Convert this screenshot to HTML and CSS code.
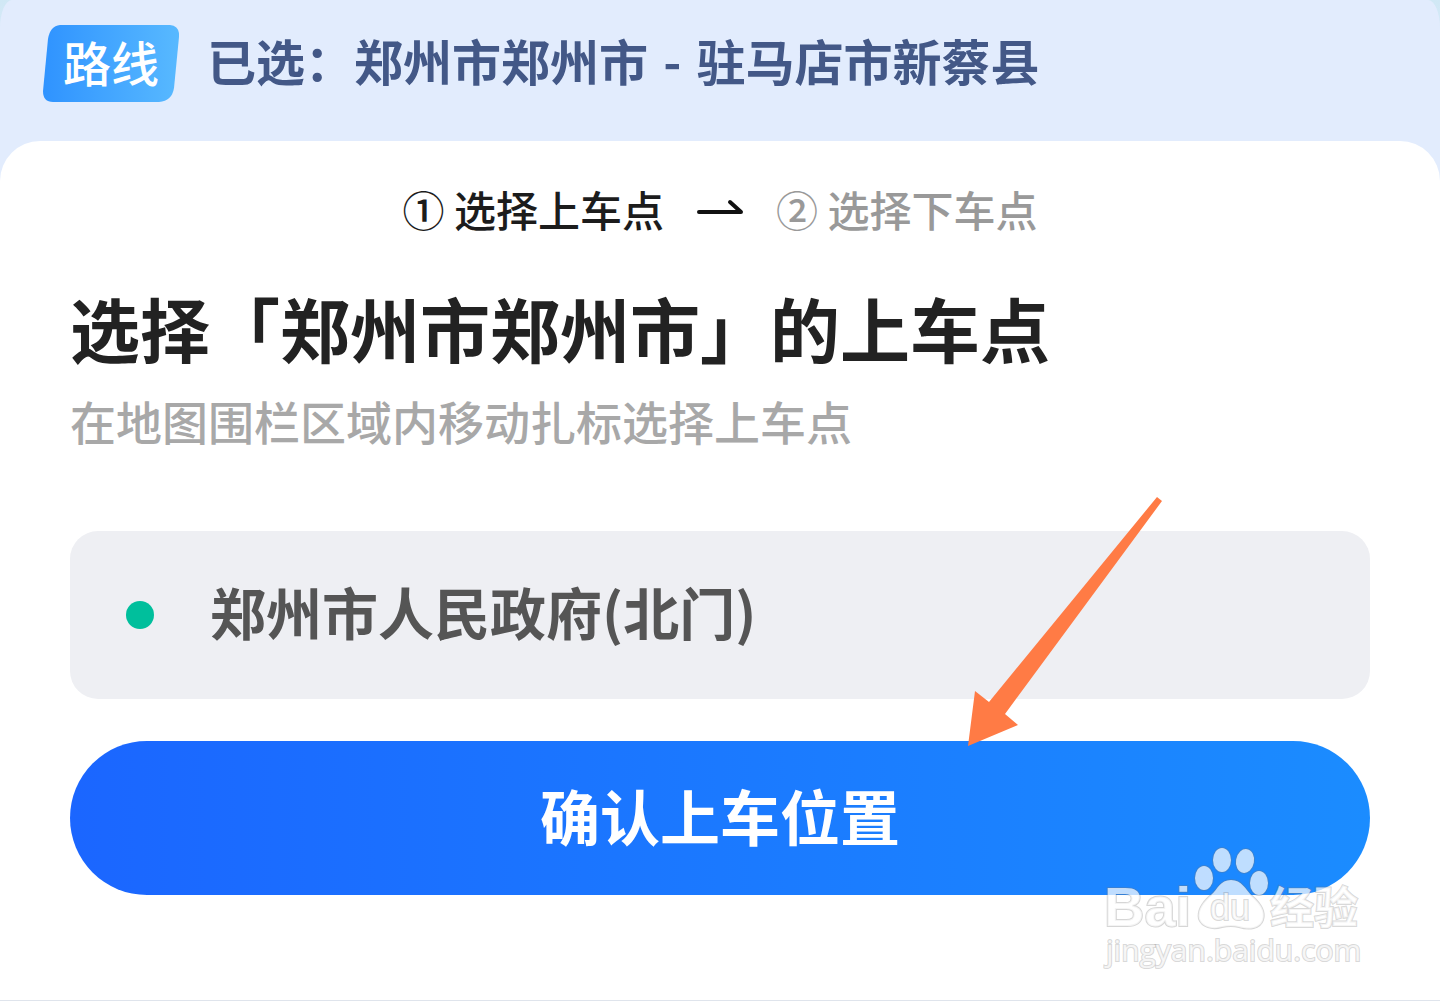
FILE: index.html
```html
<!DOCTYPE html>
<html lang="zh-CN">
<head>
<meta charset="utf-8">
<meta name="viewport" content="width=device-width, initial-scale=1">
<title>选择上车点</title>
<link rel="stylesheet" href="styles.css">
</head>
<body>
<div class="panel">
  <header class="route">
    <span class="route-badge"><svg class="route-shape" viewBox="0 0 136 77" preserveAspectRatio="none" aria-hidden="true">
      <defs><linearGradient id="badge" x1="0" y1="0" x2="1" y2="0"><stop offset="0" stop-color="#2f93ff"/><stop offset="1" stop-color="#58b9ff"/></linearGradient></defs>
      <path fill="url(#badge)" d="M17 0H127Q137 1 136 12L131 63Q129 76 116 77H10Q0 77 0 66L5 14Q7 1 17 0Z"/>
    </svg><span class="route-label">路线</span></span>
    <span class="route-text">已选：郑州市郑州市<span class="route-dash"> - </span>驻马店市新蔡县</span>
  </header>

  <main class="sheet">
    <ol class="steps">
      <li class="step step-current">① 选择上车点</li>
      <li class="step-arrow" aria-hidden="true"><svg width="48" height="20" viewBox="0 0 48 20"><path d="M3 13H45L34 3" fill="none" stroke="#111" stroke-width="4" stroke-linecap="round" stroke-linejoin="round"/></svg></li>
      <li class="step">② 选择下车点</li>
    </ol>

    <h1 class="title">选择「郑州市郑州市」的上车点</h1>
    <p class="hint">在地图围栏区域内移动扎标选择上车点</p>

    <button class="place" type="button">
      <span class="place-dot"></span>
      <span class="place-name">郑州市人民政府(北门)</span>
    </button>

    <div class="action">
      <button class="confirm" type="button">确认上车位置</button>
      <svg class="pointer" width="196" height="250" viewBox="0 0 196 250" aria-hidden="true"><path fill="#ff7b45" d="M1 249L8 194L22 205L190 0L195 4L38 217L51 228Z"/></svg>
    </div>
  </main>

  <svg class="watermark" width="270" height="130" viewBox="0 0 270 130" role="img" aria-label="Baidu 经验">
    <g class="mark">
      <text class="mark-latin" x="4" y="85">Bai</text>
      <ellipse cx="104" cy="37" rx="9" ry="12"/>
      <ellipse cx="122" cy="19" rx="9" ry="12"/>
      <ellipse cx="145" cy="20" rx="9" ry="12" transform="rotate(10 145 20)"/>
      <ellipse cx="159" cy="42" rx="9" ry="12"/>
      <path d="M131 39C142 39 145 48 152 55C160 62 166 70 163 79C160 88 149 89 139 86Q131 84 122 86C112 89 102 86 99 78C97 69 103 61 111 54C118 48 120 39 131 39Z"/>
      <text class="mark-du" x="110" y="79">du</text>
      <text class="mark-han" x="170" y="83">经验</text>
      <text class="mark-url" x="6" y="120">jingyan.baidu.com</text>
    </g>
  </svg>
</div>
</body>
</html>
```

FILE: styles.css
```css
* {
  box-sizing: border-box;
}

body {
  margin: 0;
  background: #dfe4ec;
  font-family: "Noto Sans CJK SC", "Noto Sans", sans-serif;
}

button {
  border: 0;
  font-family: inherit;
  cursor: pointer;
}

.panel {
  position: relative;
  background: linear-gradient(#d0e8f5, #e2ecfd 100px);
}

.route {
  display: flex;
  gap: 28px;
  height: 181px;
  padding: 25px 43px 0;
  border-radius: 12px 12px 0 0 / 28px 28px 0 0;
  background: #e2ecfd;
}

.route-badge {
  position: relative;
  flex: none;
  width: 136px;
  height: 77px;
  text-align: center;
}

.route-shape {
  display: block;
  width: 100%;
  height: 100%;
}

.route-label {
  position: absolute;
  inset: 0;
  color: #fff;
  font-size: 48px;
  font-weight: 500;
  line-height: 72px;
}

.route-text {
  color: #435887;
  font-size: 49px;
  font-weight: 700;
  line-height: 70px;
  white-space: nowrap;
}

.route-dash {
  padding: 0 4px;
}

.sheet {
  margin-top: -40px;
  padding: 38px 70px 105px;
  border-radius: 40px 40px 0 0;
  background: #fff;
}

.steps {
  display: flex;
  justify-content: center;
  gap: 32px;
  margin: 0;
  padding: 0;
  list-style: none;
  color: #999;
  font-size: 42px;
  font-weight: 500;
  line-height: 60px;
}

.step-current {
  color: #1c1c1c;
}

.step-arrow {
  display: flex;
  align-items: center;
}

.title {
  margin: 41px 0 0;
  color: #222;
  font-size: 70px;
  font-weight: 700;
  line-height: 96px;
}

.hint {
  margin: 12px 0 0;
  color: #a8a8a8;
  font-size: 46px;
  font-weight: 500;
  line-height: 64px;
}

.place {
  display: flex;
  align-items: flex-start;
  gap: 56px;
  width: 100%;
  height: 168px;
  margin-top: 79px;
  padding: 0 56px;
  border-radius: 28px;
  background: #eeeff3;
  color: #555;
  font-size: 56px;
  font-weight: 700;
  line-height: 160px;
}

.place-dot {
  align-self: center;
  width: 28px;
  height: 28px;
  border-radius: 50%;
  background: #00bf9c;
}

.action {
  position: relative;
  margin-top: 42px;
}

.confirm {
  display: block;
  width: 100%;
  padding: 0 0 6px;
  border-radius: 77px;
  background: linear-gradient(90deg, #1b66ff, #1b8cff);
  color: #fff;
  font-size: 60px;
  font-weight: 700;
  line-height: 148px;
}

.pointer {
  position: absolute;
  left: 69%;
  bottom: 148px;
}

.watermark {
  position: absolute;
  right: 70px;
  bottom: 29px;
}

.mark {
  fill: rgba(255, 255, 255, 0.72);
  stroke: rgba(120, 120, 120, 0.3);
  stroke-width: 2px;
  paint-order: stroke;
}

.mark-latin {
  font: 700 56px "Liberation Sans", sans-serif;
}

.mark-du {
  font: 400 36px "Liberation Sans", sans-serif;
}

.mark-han {
  font: 700 44px "Noto Sans CJK SC", sans-serif;
}

.mark-url {
  font: 400 30px "Open Sans", sans-serif;
}
```
